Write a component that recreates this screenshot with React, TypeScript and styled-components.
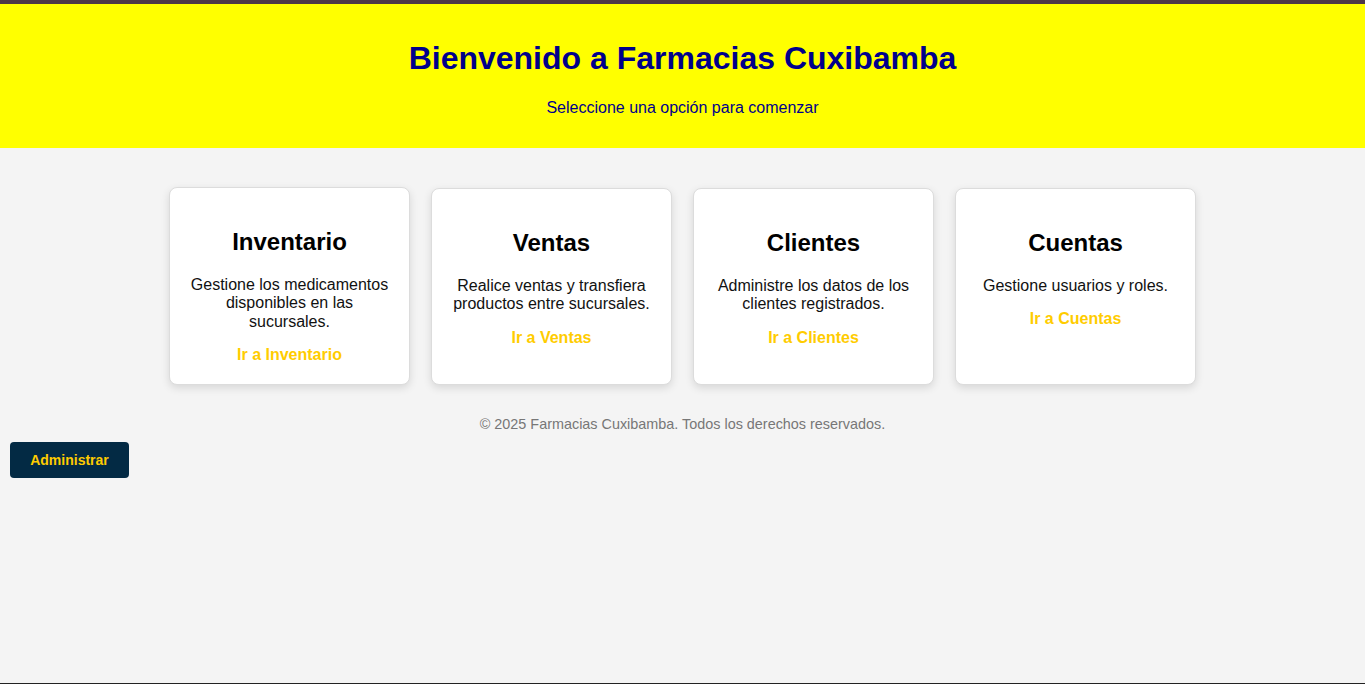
import React from "react";
import styled, { createGlobalStyle } from "styled-components";

const Global = createGlobalStyle`
  html, body { margin: 0; padding: 0; }
  body {
    font-family: "Liberation Sans", Arial, sans-serif;
    background: #f4f4f4;
    color: #000;
  }
`;

const Page = styled.div`
  min-height: 684px;
  box-sizing: border-box;
  border-top: 4px solid #4d3848;
  border-bottom: 1px solid #222;
  display: flex;
  flex-direction: column;
`;

const Header = styled.header`
  background: #ffff00;
  text-align: center;
  padding: 15px 20px 15px;
`;

const Title = styled.h1`
  margin: 21px 0 22px;
  font-size: 32px;
  font-weight: bold;
  color: #00008b;
`;

const Subtitle = styled.p`
  margin: 0 0 16px;
  font-size: 16px;
  color: #00008b;
`;

const Main = styled.main`
  flex: 1;
  padding-top: 39px;
`;

const Grid = styled.div`
  display: flex;
  justify-content: center;
  gap: 21px;
`;

const Card = styled.div<{ $offset?: number }>`
  width: 241px;
  box-sizing: border-box;
  background: #fff;
  border: 1px solid #dcdcdc;
  border-radius: 8px;
  box-shadow: 0 3px 8px rgba(0, 0, 0, 0.12);
  padding: 20px 20px 19px;
  text-align: center;
  margin-top: ${(p) => p.$offset ?? 0}px;
`;

const CardTitle = styled.h2`
  margin: 20px 0 20px;
  font-size: 24px;
  font-weight: bold;
  color: #000;
`;

const CardText = styled.p`
  margin: 0 0 15px;
  font-size: 16px;
  line-height: 18.4px;
  color: #111;
`;

const CardLink = styled.a`
  display: block;
  font-size: 16px;
  font-weight: bold;
  color: #ffcc00;
  text-decoration: none;
  line-height: 18.4px;
`;

const Footer = styled.footer`
  text-align: center;
  font-size: 14.4px;
  color: #777;
  margin-top: 31px;
  line-height: 16px;
`;

const AdminButton = styled.button`
  margin: 10px 0 0 10px;
  width: 119px;
  height: 36px;
  background: #032a44;
  color: #ffcc00;
  font-family: "Liberation Sans", Arial, sans-serif;
  font-weight: bold;
  font-size: 14px;
  border: none;
  border-radius: 4px;
  cursor: pointer;
`;

const cards = [
  { title: "Inventario", text: "Gestione los medicamentos disponibles en las sucursales.", link: "Ir a Inventario", offset: 0 },
  { title: "Ventas", text: "Realice ventas y transfiera productos entre sucursales.", link: "Ir a Ventas", offset: 1 },
  { title: "Clientes", text: "Administre los datos de los clientes registrados.", link: "Ir a Clientes", offset: 1 },
  { title: "Cuentas", text: "Gestione usuarios y roles.", link: "Ir a Cuentas", offset: 1 },
];

export default function App() {
  return (
    <>
      <Global />
      <Page>
        <Header>
          <Title>Bienvenido a Farmacias Cuxibamba</Title>
          <Subtitle>Seleccione una opción para comenzar</Subtitle>
        </Header>
        <Main>
          <Grid>
            {cards.map((c) => (
              <Card key={c.title} $offset={c.offset}>
                <CardTitle>{c.title}</CardTitle>
                <CardText>{c.text}</CardText>
                <CardLink href="#">{c.link}</CardLink>
              </Card>
            ))}
          </Grid>
          <Footer>© 2025 Farmacias Cuxibamba. Todos los derechos reservados.</Footer>
          <div>
            <AdminButton>Administrar</AdminButton>
          </div>
        </Main>
      </Page>
    </>
  );
}
